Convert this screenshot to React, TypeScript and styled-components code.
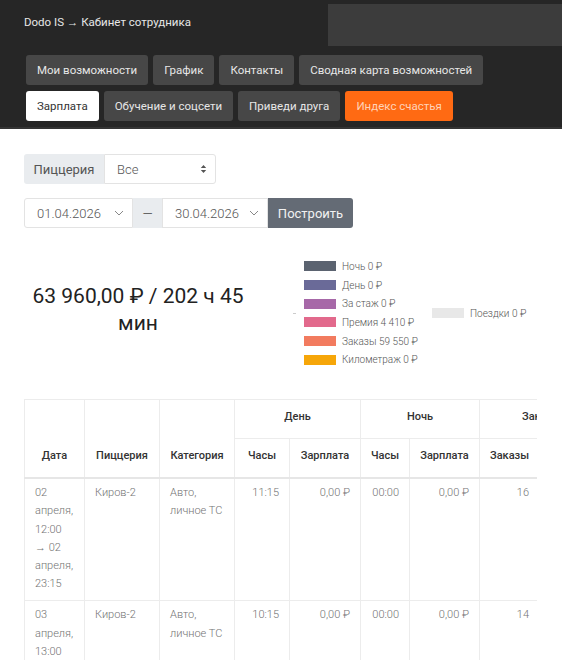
import React from 'react';
import styled, { createGlobalStyle } from 'styled-components';

const GlobalStyle = createGlobalStyle`
  html, body {
    margin: 0;
    padding: 0;
    background: #fff;
    font-family: Roboto, "Noto Sans", Arial, sans-serif;
    scrollbar-width: none;
  }
  body::-webkit-scrollbar {
    display: none;
  }
  * {
    box-sizing: border-box;
  }
`;

const Header = styled.header`
  background: #262626;
  border-bottom: 2px solid #343434;
  padding-bottom: 6px;
`;

const TopRow = styled.div`
  display: flex;
  justify-content: space-between;
  align-items: flex-start;
  height: 55px;
`;

const Brand = styled.div`
  padding: 15px 0 0 24px;
  font-size: 11.5px;
  line-height: 14px;
  color: #e6e6e6;
`;

const TopPanel = styled.div`
  width: 234px;
  height: 42px;
  margin-top: 4px;
  background: #3c3c3c;
`;

const NavRows = styled.div`
  display: flex;
  flex-direction: column;
  gap: 6px;
  padding-left: 26px;
`;

const NavRow = styled.div`
  display: flex;
  gap: 5px;
`;

const NavButton = styled.div<{ $variant?: 'active' | 'accent' }>`
  height: 30px;
  padding: 0 11px;
  display: flex;
  align-items: center;
  border-radius: 3px;
  font-size: 11.5px;
  font-weight: 400;
  white-space: nowrap;
  background: ${p => (p.$variant === 'active' ? '#ffffff' : p.$variant === 'accent' ? '#ff6a13' : '#474747')};
  color: ${p => (p.$variant === 'active' ? '#333' : p.$variant === 'accent' ? '#ffd3b8' : '#e6e6e6')};
`;

const Content = styled.main`
  padding: 25px 24px 0 24px;
`;

const InputGroup = styled.div<{ $mt?: number }>`
  display: flex;
  height: 30px;
  margin-top: ${p => p.$mt || 0}px;
  font-size: 13px;
  color: #555;
`;

const Addon = styled.div<{ $w: number }>`
  width: ${p => p.$w}px;
  display: flex;
  align-items: center;
  justify-content: center;
  background: #e9ecef;
  color: #555;
  border-radius: 3px 0 0 3px;
`;

const Field = styled.div<{ $w: number; $last?: boolean; $first?: boolean }>`
  width: ${p => p.$w}px;
  display: flex;
  align-items: center;
  justify-content: space-between;
  padding: 0 8px 0 12px;
  border: 1px solid #e3e3e3;
  border-radius: ${p => (p.$first ? '3px 0 0 3px' : p.$last ? '0 3px 3px 0' : '0')};
  color: #555;
  font-weight: 300;
  background: #fff;
`;

const Separator = styled.div`
  width: 29px;
  display: flex;
  align-items: center;
  justify-content: center;
  background: #e9ecef;
  color: #666;
`;

const BuildButton = styled.div`
  width: 85px;
  display: flex;
  align-items: center;
  justify-content: center;
  background: #646b75;
  color: #f2f2f2;
  border-radius: 0 3px 3px 0;
`;

const Summary = styled.section`
  display: flex;
  align-items: center;
  padding: 29px 0 30px;
`;

const Total = styled.div`
  width: 228px;
  text-align: center;
  font-size: 21px;
  line-height: 27px;
  color: #222;
  margin-top: -6px;
`;

const Legend = styled.div`
  display: flex;
  align-items: center;
  margin-left: 41px;
`;

const LegendDot = styled.span`
  width: 3px;
  height: 1px;
  background: #ccc;
  margin-right: 8px;
`;

const LegendColumn = styled.div<{ $w?: number }>`
  display: flex;
  flex-direction: column;
  width: ${p => (p.$w ? `${p.$w}px` : 'auto')};
`;

const LegendItem = styled.div`
  display: flex;
  align-items: center;
  height: 18.7px;
  gap: 6px;
  font-size: 10px;
  font-weight: 300;
  color: #555;
  white-space: nowrap;
`;

const Swatch = styled.span<{ $c: string }>`
  width: 32px;
  height: 10px;
  background: ${p => p.$c};
`;

const TableWrap = styled.div`
  width: 513px;
  overflow: hidden;
`;

const Table = styled.table<{ $w: number }>`
  table-layout: fixed;
  border-collapse: collapse;
  width: ${p => p.$w}px;
  font-size: 11px;
`;

const Th = styled.th`
  padding: 9px 10px 13px;
  line-height: 16px;
  font-weight: 500;
  color: #333;
  text-align: center;
  vertical-align: bottom;
  border: 1px solid #ececec;
  white-space: nowrap;
`;

const HeadRow = styled.tr`
  border-bottom: 2px solid #e6e6e6;
`;

const Td = styled.td<{ $right?: boolean }>`
  padding: 5px 10px 7px;
  line-height: 18.2px;
  font-weight: 300;
  color: #737373;
  vertical-align: top;
  text-align: ${p => (p.$right ? 'right' : 'left')};
  border: 1px solid #ececec;
`;

const Arrows = () => (
  <svg width="7" height="10" viewBox="0 0 7 10">
    <path d="M3.5 1 L6.2 4 H0.8 Z M3.5 9 L6.2 6 H0.8 Z" fill="#555" />
  </svg>
);

const Chevron = () => (
  <svg width="10" height="6" viewBox="0 0 10 6">
    <path d="M1 1 L5 5 L9 1" fill="none" stroke="#888" strokeWidth="1" />
  </svg>
);

const legend = [
  { c: '#5b6370', t: 'Ночь 0 ₽' },
  { c: '#6a6a98', t: 'День 0 ₽' },
  { c: '#a768a8', t: 'За стаж 0 ₽' },
  { c: '#e2698c', t: 'Премия 4 410 ₽' },
  { c: '#f27b5f', t: 'Заказы 59 550 ₽' },
  { c: '#f6a609', t: 'Километраж 0 ₽' },
];

const rows = [
  {
    date: '02 апреля, 12:00 → 02 апреля, 23:15',
    dayH: '11:15',
    orders: '16',
  },
  {
    date: '03 апреля, 13:00 → 03 апреля, 23:15',
    dayH: '10:15',
    orders: '14',
  },
];

const colWidths = [60, 75, 75, 55, 71, 49, 70, 60, 64, 100, 105];
const tableWidth = colWidths.reduce((a, b) => a + b, 0);

export default function App() {
  return (
    <>
      <GlobalStyle />
      <Header>
        <TopRow>
          <Brand>Dodo IS → Кабинет сотрудника</Brand>
          <TopPanel />
        </TopRow>
        <NavRows>
          <NavRow>
            <NavButton>Мои возможности</NavButton>
            <NavButton>График</NavButton>
            <NavButton>Контакты</NavButton>
            <NavButton>Сводная карта возможностей</NavButton>
          </NavRow>
          <NavRow>
            <NavButton $variant="active">Зарплата</NavButton>
            <NavButton>Обучение и соцсети</NavButton>
            <NavButton>Приведи друга</NavButton>
            <NavButton $variant="accent">Индекс счастья</NavButton>
          </NavRow>
        </NavRows>
      </Header>

      <Content>
        <InputGroup>
          <Addon $w={80}>Пиццерия</Addon>
          <Field $w={112} $last>
            <span>Все</span>
            <Arrows />
          </Field>
        </InputGroup>

        <InputGroup $mt={14}>
          <Field $w={109} $first>
            <span>01.04.2026</span>
            <Chevron />
          </Field>
          <Separator>—</Separator>
          <Field $w={106}>
            <span>30.04.2026</span>
            <Chevron />
          </Field>
          <BuildButton>Построить</BuildButton>
        </InputGroup>

        <Summary>
          <Total>63 960,00 ₽ / 202 ч 45 мин</Total>
          <Legend>
            <LegendDot />
            <LegendColumn $w={128}>
              {legend.map(l => (
                <LegendItem key={l.t}>
                  <Swatch $c={l.c} />
                  {l.t}
                </LegendItem>
              ))}
            </LegendColumn>
            <LegendColumn>
              <LegendItem>
                <Swatch $c="#e8e8e8" />
                Поездки 0 ₽
              </LegendItem>
            </LegendColumn>
          </Legend>
        </Summary>

        <TableWrap>
          <Table $w={tableWidth}>
            <colgroup>
              {colWidths.map((w, i) => (
                <col key={i} style={{ width: w }} />
              ))}
            </colgroup>
            <thead>
              <tr>
                <Th rowSpan={2}>Дата</Th>
                <Th rowSpan={2}>Пиццерия</Th>
                <Th rowSpan={2}>Категория</Th>
                <Th colSpan={2}>День</Th>
                <Th colSpan={2}>Ночь</Th>
                <Th colSpan={2}>Заказы</Th>
                <Th rowSpan={2}>Премия</Th>
                <Th rowSpan={2}>Итого</Th>
              </tr>
              <HeadRow>
                <Th>Часы</Th>
                <Th>Зарплата</Th>
                <Th>Часы</Th>
                <Th>Зарплата</Th>
                <Th>Заказы</Th>
                <Th>Сумма</Th>
              </HeadRow>
            </thead>
            <tbody>
              {rows.map(r => (
                <tr key={r.date}>
                  <Td>{r.date}</Td>
                  <Td>Киров-2</Td>
                  <Td>Авто, личное ТС</Td>
                  <Td $right>{r.dayH}</Td>
                  <Td $right>0,00 ₽</Td>
                  <Td $right>00:00</Td>
                  <Td $right>0,00 ₽</Td>
                  <Td $right>{r.orders}</Td>
                  <Td $right>0,00 ₽</Td>
                  <Td $right>0,00 ₽</Td>
                  <Td $right>0,00 ₽</Td>
                </tr>
              ))}
            </tbody>
          </Table>
        </TableWrap>
      </Content>
    </>
  );
}
